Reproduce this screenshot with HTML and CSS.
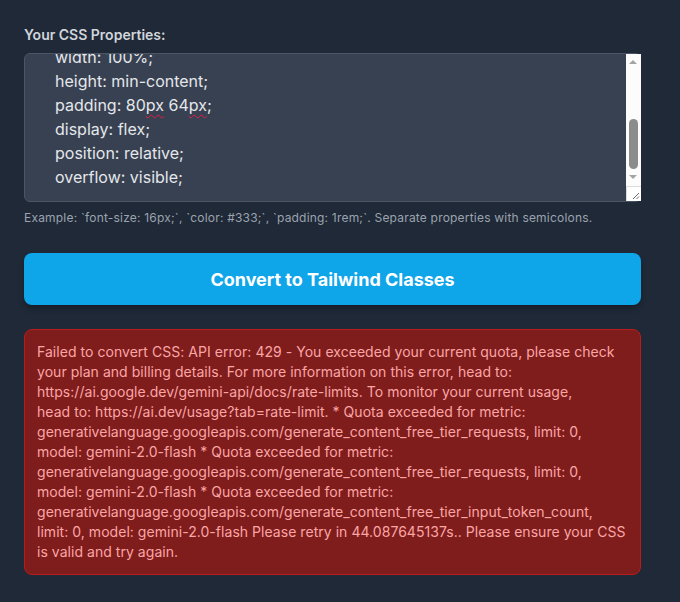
FILE: index.html
```
<!DOCTYPE html>
<html lang="en">
<head>
<meta charset="utf-8">
<title>CSS to Tailwind</title>
<link rel="stylesheet" href="styles.css">
</head>
<body>
<main class="page">
  <section class="form">
    <label class="label" for="css-input">Your CSS Properties:</label>
    <div class="editor-wrap">
      <div class="editor" id="css-input" role="textbox" aria-multiline="true"><div class="line">    max-width: 1200px;</div><div class="line">    color: #333;</div><div class="line">    font-size: 16px;</div><div class="line">    margin: 0 auto;</div><div class="line">    background-color: #fff;</div><div class="line">    border-radius: 8px;</div><div class="line">    width: 100%;</div><div class="line">    height: min-content;</div><div class="line">    padding: 80<span class="typo">px</span> 64<span class="typo">px</span>;</div><div class="line">    display: flex;</div><div class="line">    position: relative;</div><div class="line">    overflow: visible;</div></div>
      <div class="scrollbar" aria-hidden="true">
        <span class="arrow up"></span>
        <span class="thumb"></span>
        <span class="arrow down"></span>
        <span class="resizer">
          <svg width="14" height="14" viewBox="0 0 14 14"><path d="M12 6 L6 12 M12 9.5 L9.5 12" stroke="#6b6b6b" stroke-width="1" fill="none"/></svg>
        </span>
      </div>
    </div>
    <p class="hint">Example: `font-size: 16px;`, `color: #333;`, `padding: 1rem;`. Separate properties with semicolons.</p>
    <button class="convert" type="button">Convert to Tailwind Classes</button>
    <div class="error" role="alert">Failed to convert CSS: API error: 429 - You exceeded your current quota, please check<br>your plan and billing details. For more information on this error, head to:<br>https://ai.google.dev/gemini-api/docs/rate-limits. To monitor your current usage,<br>head to: https://ai.dev/usage?tab=rate-limit. * Quota exceeded for metric:<br>generativelanguage.googleapis.com/generate_content_free_tier_requests, limit: 0,<br>model: gemini-2.0-flash * Quota exceeded for metric:<br>generativelanguage.googleapis.com/generate_content_free_tier_requests, limit: 0,<br>model: gemini-2.0-flash * Quota exceeded for metric:<br>generativelanguage.googleapis.com/generate_content_free_tier_input_token_count,<br>limit: 0, model: gemini-2.0-flash Please retry in 44.087645137s.. Please ensure your CSS<br>is valid and try again.</div>
  </section>
</main>
<script src="app.js"></script>
</body>
</html>
```
FILE: styles.css
```
html, body {
  margin: 0;
  padding: 0;
  background: #1f2937;
}
body {
  font-family: "Inter", "Noto Sans", sans-serif;
  color: #e5e7eb;
}
.page {
  padding: 25px 0 0 24px;
}
.form {
  width: 617px;
  display: flex;
  flex-direction: column;
}
.label {
  font-size: 14px;
  line-height: 20px;
  font-weight: 600;
  color: #d1d5db;
  margin-bottom: 8px;
}
.editor-wrap {
  position: relative;
}
.editor {
  box-sizing: border-box;
  height: 149px;
  overflow: hidden;
  background: #374151;
  border: 1px solid #4b5563;
  border-radius: 6px;
  padding: 12px;
  font-size: 16px;
  line-height: 24px;
  color: #e5e7eb;
  white-space: pre;
}
.typo {
  text-decoration: underline wavy #e11d48;
  text-decoration-thickness: 1px;
  text-underline-offset: 3px;
  text-decoration-skip-ink: none;
}
.scrollbar {
  position: absolute;
  top: 1px;
  right: 0;
  bottom: 1px;
  width: 15px;
  background: #fcfcfc;
}
.arrow {
  position: absolute;
  left: 3px;
  width: 0;
  height: 0;
  border-left: 4.5px solid transparent;
  border-right: 4.5px solid transparent;
}
.arrow.up {
  top: 6px;
  border-bottom: 4.5px solid #a3a3a3;
}
.arrow.down {
  top: 121px;
  border-top: 4.5px solid #a3a3a3;
}
.thumb {
  position: absolute;
  left: 3px;
  top: 65px;
  width: 9px;
  height: 50px;
  border-radius: 4.5px;
  background: #8c8c8c;
}
.resizer {
  position: absolute;
  right: 0;
  bottom: 0;
  width: 14px;
  height: 14px;
  border-top: 1px solid #dcdcdc;
  border-left: 1px solid #dcdcdc;
  background: #fff;
  display: flex;
}
.hint {
  margin: 8px 0 0;
  font-size: 12px;
  line-height: 16px;
  letter-spacing: 0.2px;
  color: #9ca3af;
}
.convert {
  margin-top: 27px;
  height: 52px;
  border: 0;
  border-radius: 8px;
  background: #0ea5e9;
  color: #fff;
  font-family: inherit;
  font-size: 18px;
  font-weight: 700;
  box-shadow: 0 4px 6px -1px rgba(0,0,0,0.25), 0 2px 4px -2px rgba(0,0,0,0.2);
}
.error {
  margin-top: 24px;
  background: #7f1d1d;
  border: 1px solid #b91c1c;
  border-radius: 8px;
  padding: 12px;
  font-size: 14px;
  line-height: 20px;
  letter-spacing: 0.04px;
  color: #fca5a5;
  white-space: nowrap;
}
```
FILE: app.js
```
var ed = document.getElementById('css-input');
ed.scrollTop = ed.scrollHeight;
```
